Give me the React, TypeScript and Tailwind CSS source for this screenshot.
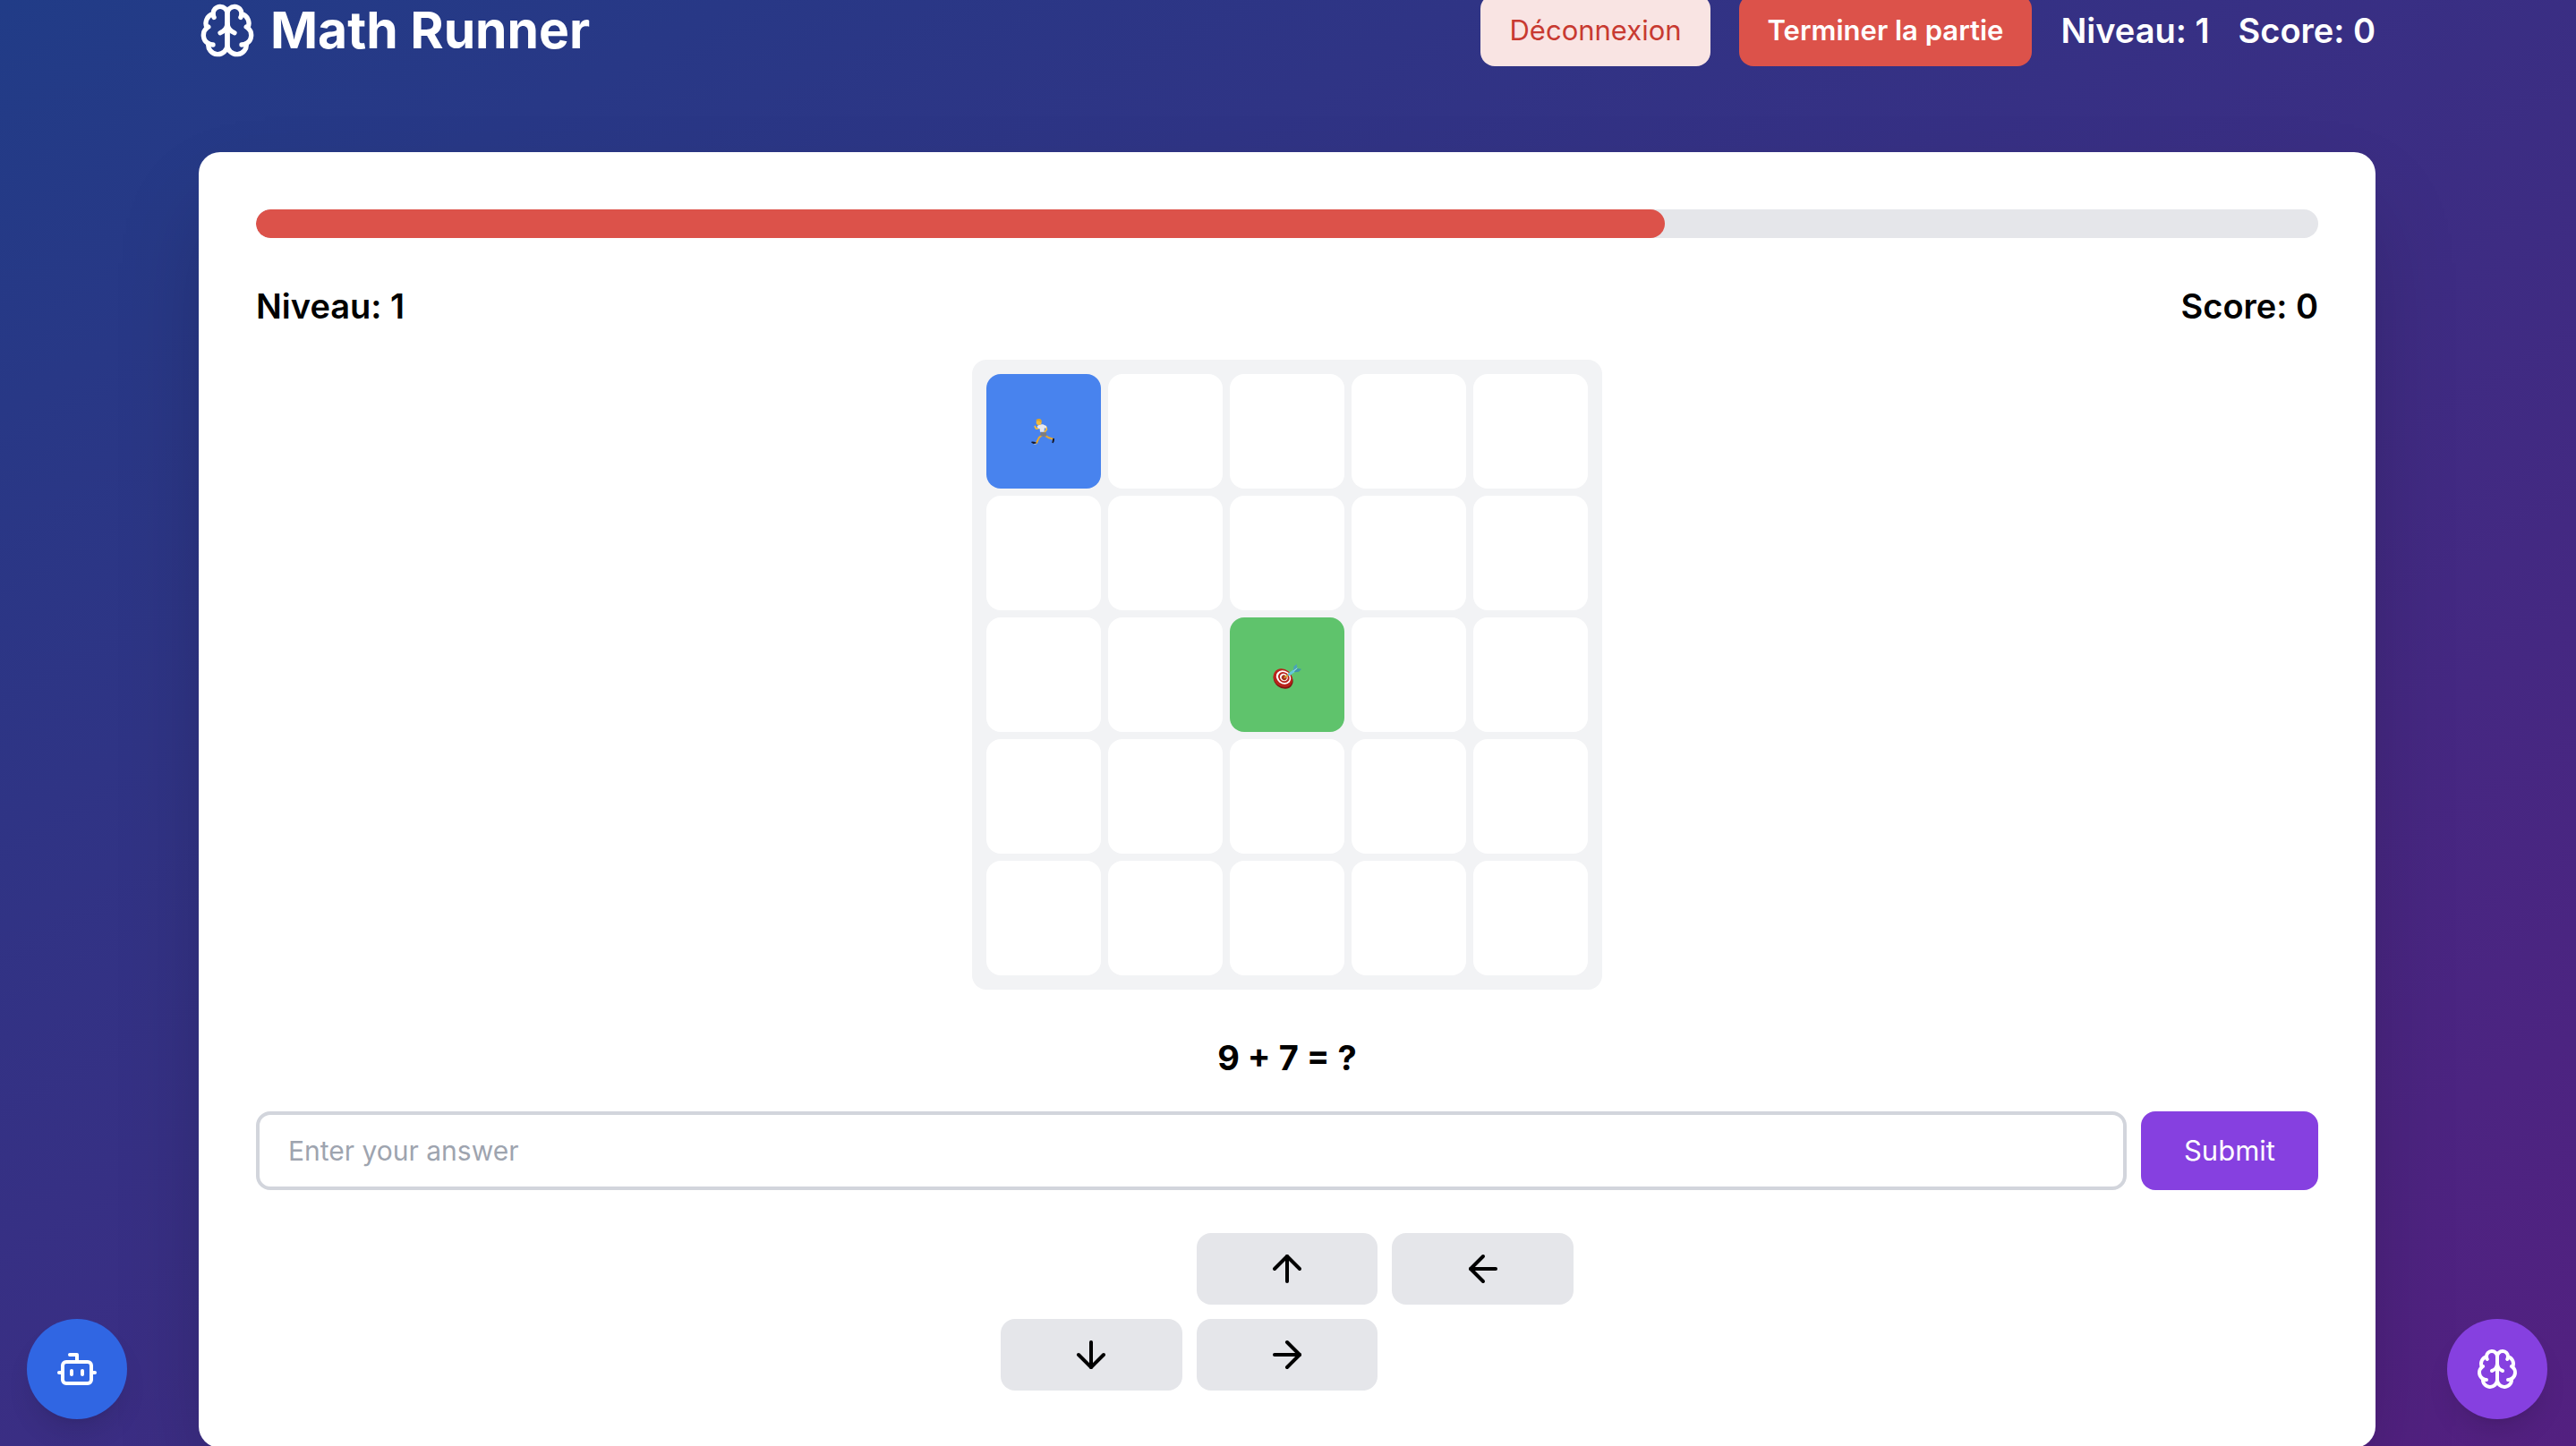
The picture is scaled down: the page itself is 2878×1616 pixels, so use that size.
import { useState } from 'react';
import { ArrowDown, ArrowLeft, ArrowRight, ArrowUp } from 'lucide-react';

const GRID_SIZE = 5;
const TIME_TOTAL = 60;
const TIME_LEFT = 41;
const PLAYER = 0;
const GOAL = 12;

function BrainIcon({ className }: { className: string }) {
  return (
    <svg
      className={className}
      viewBox="0 0 24 24"
      fill="none"
      stroke="currentColor"
      strokeWidth="2"
      strokeLinecap="round"
      strokeLinejoin="round"
      aria-hidden="true"
    >
      <path d="M12 5a3 3 0 1 0-5.997.125 4 4 0 0 0-2.526 5.77 4 4 0 0 0 .556 6.588A4 4 0 1 0 12 18Z" />
      <path d="M12 5a3 3 0 1 1 5.997.125 4 4 0 0 1 2.526 5.77 4 4 0 0 1-.556 6.588A4 4 0 1 1 12 18Z" />
      <path d="M15 13a4.5 4.5 0 0 1-3-4 4.5 4.5 0 0 1-3 4" />
      <path d="M17.599 6.5a3 3 0 0 0 .399-1.375" />
      <path d="M6.003 5.125A3 3 0 0 0 6.401 6.5" />
      <path d="M3.477 10.896a4 4 0 0 1 .585-.396" />
      <path d="M19.938 10.5a4 4 0 0 1 .585.396" />
      <path d="M6 18a4 4 0 0 1-1.967-.516" />
      <path d="M19.967 17.484A4 4 0 0 1 18 18" />
    </svg>
  );
}

function BotIcon({ className }: { className: string }) {
  return (
    <svg
      className={className}
      viewBox="0 0 24 24"
      fill="none"
      stroke="currentColor"
      strokeWidth="2"
      strokeLinecap="round"
      strokeLinejoin="round"
      aria-hidden="true"
    >
      <path d="M12 8V4H8" />
      <rect width="16" height="12" x="4" y="8" rx="2" />
      <path d="M2 14h2" />
      <path d="M20 14h2" />
      <path d="M15 13v2" />
      <path d="M9 13v2" />
    </svg>
  );
}

function Runner() {
  return (
    <svg className="size-8" viewBox="240 228 96 96" role="img" aria-label="Joueur">
      <g fill="none" strokeLinecap="round" strokeLinejoin="round">
        <path d="M285 287l-13 11-8 17" stroke="#e9a92f" strokeWidth="6" />
        <path d="M291 289l15 9 14 4" stroke="#e9a92f" strokeWidth="6" />
        <path d="M270 266l-7 1-4-7" stroke="#f0b63a" strokeWidth="6" />
        <path d="M296 262l2 8-8 10" stroke="#f0b63a" strokeWidth="6" />
      </g>
      <path d="M278 278l19 2 1 12-9 2-12-3z" fill="#7d7d80" />
      <path d="M268 257q8-5 18-4l11 5 1 7-5 1-2-3-1 10-1 5-13 0-1-10-6-2-3-6z" fill="#e6e8ee" />
      <circle cx="272" cy="246" r="9" fill="#f2b93b" />
      <path d="M262 240q2-7 11-6 9 1 8 9l-3 3-5-5q-7 1-11-1z" fill="#dca32b" />
      <path d="M247 311q7-1 17 3l-2 5q-8 0-15-5z" fill="#15182a" />
      <path d="M256 319l8-1" stroke="#f4f4f4" strokeWidth="2" />
      <path d="M319 299l5 1q1 8-4 16l-4-2z" fill="#15182a" />
    </svg>
  );
}

function Target() {
  return (
    <svg className="size-8" viewBox="306 204 96 96" role="img" aria-label="Objectif">
      <ellipse cx="341" cy="268" rx="35" ry="29" transform="rotate(38 341 268)" fill="#7f1712" />
      <ellipse cx="340" cy="263" rx="34" ry="29" transform="rotate(38 340 263)" fill="#b9231c" />
      <ellipse cx="342" cy="261" rx="26" ry="22" transform="rotate(38 342 261)" fill="#fff" />
      <ellipse cx="343" cy="261" rx="20" ry="17" transform="rotate(38 343 261)" fill="#b9231c" />
      <ellipse cx="343" cy="261" rx="14" ry="12" transform="rotate(38 343 261)" fill="#fff" />
      <ellipse cx="344" cy="262" rx="9" ry="8" transform="rotate(38 344 262)" fill="#a5301c" />
      <path d="M346 261l14-10" stroke="#d9a32c" strokeWidth="5" strokeLinecap="round" />
      <path d="M361 251l18-13" stroke="#62c9dc" strokeWidth="9" strokeLinecap="round" />
      <path d="M375 238l1-13 10-9 2 14z" fill="#4aa5b8" />
      <path d="M377 240l12-9 13 2-9 9-12 2z" fill="#3f95aa" />
      <path d="M376 240l12-10" stroke="#a9e6ee" strokeWidth="3" />
    </svg>
  );
}

const ARROW = 'flex items-center justify-center rounded-2xl bg-[#e5e6ea] p-4';
const STAT = 'text-[38px] leading-[56px] font-semibold';

export default function App() {
  const [answer, setAnswer] = useState('');

  return (
    <div className="min-h-screen overflow-hidden bg-linear-to-br/srgb from-[#213c87] to-[#532080] pr-0.5 font-['Inter',sans-serif] text-[31px] leading-[48px] text-black">
      <div className="mx-auto -mt-1.5 max-w-[2560px] px-16">
        <header className="mb-24 flex items-center justify-between text-white">
          <div className="flex items-center gap-4">
            <BrainIcon className="size-16" />
            <h1 className="text-[57px] leading-[64px] font-bold">Math Runner</h1>
          </div>
          <div className="flex items-center gap-8">
            <button type="button" className="rounded-2xl bg-[#f9e4e3] px-8 py-4 text-[#c83a31]">
              Déconnexion
            </button>
            <button type="button" className="rounded-2xl bg-[#dc524a] px-8 py-4 font-semibold">
              Terminer la partie
            </button>
            <span className={STAT}>Niveau: 1</span>
            <span className={STAT}>Score: 0</span>
          </div>
        </header>

        <main className="rounded-3xl bg-white p-16 shadow-[0_50px_100px_-24px_rgba(0,0,0,0.25)]">
          <div
            className="mb-12 h-8 overflow-hidden rounded-full bg-[#e5e6ea]"
            role="progressbar"
            aria-label="Temps restant"
            aria-valuemin={0}
            aria-valuemax={TIME_TOTAL}
            aria-valuenow={TIME_LEFT}
          >
            <div
              className="h-full rounded-full bg-[#dc524a]"
              style={{ width: `${(TIME_LEFT / TIME_TOTAL) * 100}%` }}
            />
          </div>

          <div className="mb-8 flex justify-between">
            <span className={STAT}>Niveau: 1</span>
            <span className={STAT}>Score: 0</span>
          </div>

          <div className="mx-auto mb-12 grid w-fit grid-cols-5 gap-2 rounded-2xl bg-[#f2f3f5] p-4">
            {Array.from({ length: GRID_SIZE * GRID_SIZE }, (_, i) => {
              const color = i === PLAYER ? 'bg-[#4883ee]' : i === GOAL ? 'bg-[#5fc36c]' : 'bg-white';
              return (
                <div key={i} className={`flex size-32 items-center justify-center rounded-2xl ${color}`}>
                  {i === PLAYER && <Runner />}
                  {i === GOAL && <Target />}
                </div>
              );
            })}
          </div>

          <h2 className="mb-8 text-center text-[38px] leading-[56px] font-bold">9 + 7 = ?</h2>

          <form className="mb-12 flex gap-4" onSubmit={(e) => e.preventDefault()}>
            <input
              type="text"
              aria-label="Enter your answer"
              placeholder="Enter your answer"
              value={answer}
              onChange={(e) => setAnswer(e.target.value)}
              className="min-w-0 flex-1 rounded-2xl border-4 border-[#d2d5dc] bg-white px-8 py-4 text-[30px] placeholder:text-[#9ea4af]"
            />
            <button type="submit" className="rounded-2xl bg-[#8640e0] px-12 py-4 text-white">
              Submit
            </button>
          </form>

          <div className="mx-auto grid max-w-[640px] grid-cols-3 gap-4">
            <button type="button" aria-label="Haut" className={`col-start-2 ${ARROW}`}>
              <ArrowUp className="size-12" />
            </button>
            <button type="button" aria-label="Gauche" className={ARROW}>
              <ArrowLeft className="size-12" />
            </button>
            <button type="button" aria-label="Bas" className={ARROW}>
              <ArrowDown className="size-12" />
            </button>
            <button type="button" aria-label="Droite" className={ARROW}>
              <ArrowRight className="size-12" />
            </button>
          </div>
        </main>
      </div>

      <button
        type="button"
        aria-label="Assistant"
        className="fixed bottom-[30px] left-[30px] rounded-full bg-[#3066e3] p-8 text-white shadow-[0_20px_30px_-6px_rgba(0,0,0,0.1),0_8px_12px_-8px_rgba(0,0,0,0.1)]"
      >
        <BotIcon className="size-12" />
      </button>
      <button
        type="button"
        aria-label="Entraînement"
        className="fixed right-8 bottom-[30px] rounded-full bg-[#8640e0] p-8 text-white shadow-[0_20px_30px_-6px_rgba(0,0,0,0.1),0_8px_12px_-8px_rgba(0,0,0,0.1)]"
      >
        <BrainIcon className="size-12" />
      </button>
    </div>
  );
}
